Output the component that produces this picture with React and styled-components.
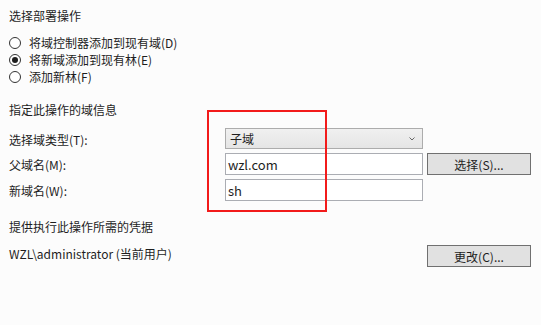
import React from "react";
import styled, { createGlobalStyle } from "styled-components";

const Global = createGlobalStyle`
  html, body { margin: 0; padding: 0; background: #fcfcfc; }
  body {
    width: 541px; height: 325px; overflow: hidden;
    font-family: "Noto Sans CJK SC", "Noto Sans", sans-serif;
    font-size: 12px; color: #1e1e1e;
  }
`;

const Page = styled.div`
  padding: 7px 10px 0 9px;
  display: flex;
  flex-direction: column;
`;

const Heading = styled.div`
  line-height: 18px;
  height: 18px;
  margin-top: ${(p) => p.$mt || 0}px;
`;

const RadioGroup = styled.div`
  display: flex;
  flex-direction: column;
  margin-top: 9px;
`;

const RadioRow = styled.label`
  display: flex;
  align-items: center;
  height: 17px;
  gap: 8px;
`;

const RadioCircle = styled.span`
  width: 12px;
  height: 12px;
  box-sizing: border-box;
  border-radius: 50%;
  border: 1px solid #333;
  background: #fff;
  display: flex;
  align-items: center;
  justify-content: center;
  &::after {
    content: "";
    width: 6px;
    height: 6px;
    border-radius: 50%;
    background: ${(p) => (p.$checked ? "#1e1e1e" : "transparent")};
  }
`;

const FormWrap = styled.div`
  position: relative;
  margin-top: 9px;
`;

const FormGrid = styled.div`
  display: grid;
  grid-template-columns: 212px 198px 104px;
  grid-template-rows: 21px 22px 22px;
  column-gap: 4px;
  row-gap: 4px;
  align-items: stretch;
`;

const Label = styled.div`
  display: flex;
  align-items: center;
  padding-top: 1px;
`;

const Combo = styled.div`
  box-sizing: border-box;
  border: 1px solid #acacac;
  background: linear-gradient(#f0f0f0, #e5e5e5);
  display: flex;
  align-items: center;
  justify-content: space-between;
  padding: 0 7px 0 4px;
`;

const Input = styled.div`
  box-sizing: border-box;
  border: 1px solid #abadb3;
  background: #fff;
  display: flex;
  align-items: center;
  padding: 0 2px;
  font-size: 13px;
`;

const Button = styled.div`
  box-sizing: border-box;
  border: 1px solid #707070;
  background: #e1e1e1;
  display: flex;
  align-items: center;
  justify-content: center;
  height: ${(p) => p.$h || 22}px;
  width: 104px;
`;

const Highlight = styled.div`
  position: absolute;
  left: 198px;
  top: -18px;
  width: 120px;
  height: 102px;
  box-sizing: border-box;
  border: 2px solid #f21b1b;
  pointer-events: none;
`;

const CredRow = styled.div`
  display: flex;
  justify-content: space-between;
  align-items: flex-start;
  margin-top: 9px;
`;

const CredText = styled.div`
  line-height: 17px;
`;

const Chevron = () => (
  <svg width="6" height="4" viewBox="0 0 6 4">
    <path d="M0.5 0.5 L3 3 L5.5 0.5" fill="none" stroke="#666" strokeWidth="1" />
  </svg>
);

export default function App() {
  return (
    <>
      <Global />
      <Page>
        <Heading>选择部署操作</Heading>
        <RadioGroup>
          <RadioRow><RadioCircle />将域控制器添加到现有域(D)</RadioRow>
          <RadioRow><RadioCircle $checked />将新域添加到现有林(E)</RadioRow>
          <RadioRow><RadioCircle />添加新林(F)</RadioRow>
        </RadioGroup>
        <Heading $mt={16}>指定此操作的域信息</Heading>
        <FormWrap>
          <FormGrid>
            <Label>选择域类型(T):</Label>
            <Combo>子域<Chevron /></Combo>
            <div />
            <Label>父域名(M):</Label>
            <Input>wzl.com</Input>
            <Button>选择(S)...</Button>
            <Label>新域名(W):</Label>
            <Input>sh</Input>
            <div />
          </FormGrid>
          <Highlight />
        </FormWrap>
        <Heading $mt={17}>提供执行此操作所需的凭据</Heading>
        <CredRow>
          <CredText>WZL\administrator (当前用户)</CredText>
          <Button>更改(C)...</Button>
        </CredRow>
      </Page>
    </>
  );
}
